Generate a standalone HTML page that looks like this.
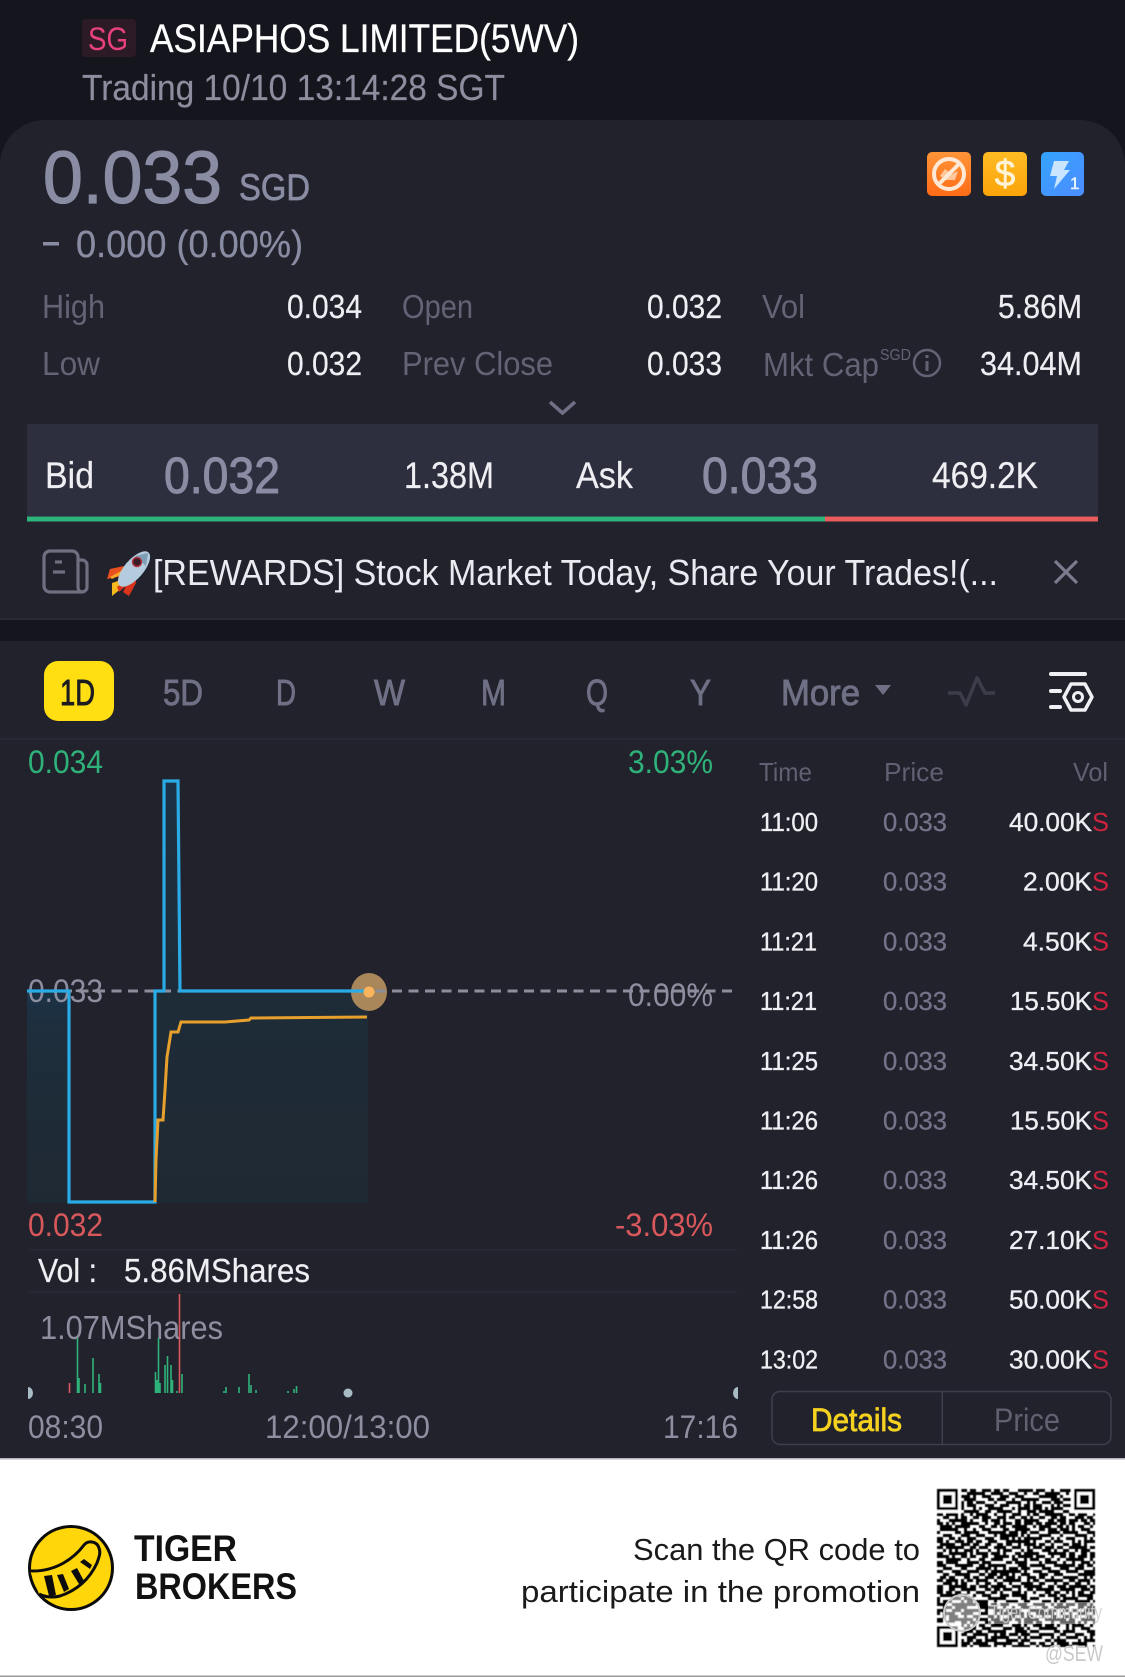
<!DOCTYPE html>
<html><head><meta charset="utf-8"><style>
html,body{margin:0;padding:0;background:#14151d;width:1125px;height:1677px;overflow:hidden}
svg{display:block;position:absolute;left:0;top:0}
text{font-family:"Liberation Sans",sans-serif;white-space:pre}
.g{fill:#626375}.w{fill:#eeeef3;stroke:#eeeef3;stroke-width:.2}.p{fill:#8a8ca3}.m{fill:#8e8fa1}
.tab{fill:#6f7085;stroke:#6f7085;stroke-width:.9}
.t{font-size:26px;fill:#eeeef3;stroke:#eeeef3;stroke-width:.35}
.q{font-size:26px;fill:#73748a;stroke:#73748a;stroke-width:.3}
.s{font-size:26px;fill:#d0213f}
</style></head><body>
<svg width="1125" height="1677" viewBox="0 0 1125 1677" xmlns="http://www.w3.org/2000/svg">
<defs>
<linearGradient id="fl" x1="0" y1="0" x2="0" y2="1"><stop offset="0" stop-color="#1b3247"/><stop offset=".2" stop-color="#1e2e3c"/><stop offset="1" stop-color="#1f2933"/></linearGradient>
<linearGradient id="o" x1="0" y1="0" x2="0" y2="1"><stop offset="0" stop-color="#ff9438"/><stop offset="1" stop-color="#ff6c16"/></linearGradient>
<linearGradient id="y" x1="0" y1="0" x2="0" y2="1"><stop offset="0" stop-color="#ffbb24"/><stop offset="1" stop-color="#fba40a"/></linearGradient>
<linearGradient id="b" x1="0" y1="0" x2="1" y2="1"><stop offset="0" stop-color="#34a4ff"/><stop offset="1" stop-color="#4d8cff"/></linearGradient>
<pattern id="qa" width="11" height="11" patternUnits="userSpaceOnUse" patternTransform="translate(937 1489) scale(3)"><path stroke="#000" stroke-width="1" d="M0 .5h2M5 .5h1M8 .5h2M3 1.5h2M7 1.5h1M10 1.5h1M1 2.5h1M4 2.5h3M0 3.5h1M6 3.5h2M9 3.5h2M2 4.5h3M8 4.5h1M0 5.5h2M5 5.5h1M7 5.5h1M10 5.5h1M3 6.5h1M6 6.5h3M1 7.5h2M5 7.5h1M9 7.5h2M0 8.5h1M3 8.5h3M8 8.5h1M2 9.5h1M6 9.5h1M9 9.5h1M0 10.5h1M4 10.5h2M7 10.5h3"/></pattern>
<pattern id="qb" width="13" height="13" patternUnits="userSpaceOnUse" patternTransform="translate(937 1489) scale(3)"><path stroke="#000" stroke-width="1" d="M2 .5h3M9 .5h1M0 1.5h1M6 1.5h2M11 1.5h2M2 2.5h1M8 2.5h3M4 3.5h2M12 3.5h1M0 4.5h2M6 4.5h1M10 4.5h2M3 5.5h2M8 5.5h1M1 6.5h1M6 6.5h3M12 6.5h1M4 7.5h1M9 7.5h3M0 8.5h2M6 8.5h1M2 9.5h2M8 9.5h2M12 9.5h1M5 10.5h3M0 11.5h1M3 11.5h1M10 11.5h2M1 12.5h2M6 12.5h1M8 12.5h2"/></pattern>
<filter id="soft" x="-5%" y="-5%" width="110%" height="110%"><feGaussianBlur stdDeviation=".6"/></filter>
</defs>

<!-- header -->
<rect width="1125" height="1677" fill="#14151d"/>
<rect x="82" y="19" width="54" height="38" rx="4" fill="#2d1a27"/>
<text x="88" y="50" font-size="32" fill="#e8427c" textLength="40" lengthAdjust="spacingAndGlyphs">SG</text>
<text x="150" y="52" font-size="40" fill="#fff" stroke="#fff" stroke-width=".3" textLength="429" lengthAdjust="spacingAndGlyphs">ASIAPHOS LIMITED(5WV)</text>
<text x="82" y="100" font-size="36" fill="#8c8d9e" stroke="#8c8d9e" stroke-width=".2" textLength="423" lengthAdjust="spacingAndGlyphs">Trading 10/10 13:14:28 SGT</text>

<!-- quote card -->
<path d="M0 620V165a45 45 0 0 1 45-45H1080a45 45 0 0 1 45 45V620z" fill="#21222c"/>
<rect x="0" y="618" width="1125" height="2" fill="#282934"/>
<text x="43" y="203" font-size="74" class="p" stroke="#8a8ca3" stroke-width="1.200" textLength="179" lengthAdjust="spacingAndGlyphs">0.033</text>
<text x="239" y="200" font-size="37" class="p" stroke="#8a8ca3" stroke-width=".7" textLength="71" lengthAdjust="spacingAndGlyphs">SGD</text>
<rect x="43" y="242" width="16" height="3.500" fill="#8a8ca3"/>
<text x="76" y="257" font-size="38" class="p" stroke="#8a8ca3" stroke-width=".3" textLength="227" lengthAdjust="spacingAndGlyphs">0.000 (0.00%)</text>

<text x="42" y="318" font-size="33" class="g" textLength="63" lengthAdjust="spacingAndGlyphs">High</text>
<text x="287" y="318" font-size="33" class="w" textLength="75" lengthAdjust="spacingAndGlyphs">0.034</text>
<text x="402" y="318" font-size="33" class="g" textLength="71" lengthAdjust="spacingAndGlyphs">Open</text>
<text x="647" y="318" font-size="33" class="w" textLength="75" lengthAdjust="spacingAndGlyphs">0.032</text>
<text x="762" y="318" font-size="33" class="g" textLength="43" lengthAdjust="spacingAndGlyphs">Vol</text>
<text x="998" y="318" font-size="33" class="w" textLength="84" lengthAdjust="spacingAndGlyphs">5.86M</text>
<text x="42" y="375" font-size="33" class="g" textLength="58" lengthAdjust="spacingAndGlyphs">Low</text>
<text x="287" y="375" font-size="33" class="w" textLength="75" lengthAdjust="spacingAndGlyphs">0.032</text>
<text x="402" y="375" font-size="33" class="g" textLength="151" lengthAdjust="spacingAndGlyphs">Prev Close</text>
<text x="647" y="375" font-size="33" class="w" textLength="75" lengthAdjust="spacingAndGlyphs">0.033</text>
<text x="763" y="376" font-size="33" class="g" textLength="116" lengthAdjust="spacingAndGlyphs">Mkt Cap</text>
<text x="880" y="360" font-size="16" class="g" textLength="31" lengthAdjust="spacingAndGlyphs">SGD</text>
<circle cx="927" cy="363" r="13" fill="none" stroke="#626375" stroke-width="2.500"/>
<rect x="925.500" y="361" width="3" height="10" fill="#626375"/><rect x="925.500" y="355" width="3" height="3" fill="#626375"/>
<text x="980" y="375" font-size="33" class="w" textLength="102" lengthAdjust="spacingAndGlyphs">34.04M</text>
<path d="M550 402l12.500 11 12.500-11" fill="none" stroke="#6f7085" stroke-width="3.500"/>

<!-- badges -->
<rect x="927" y="152" width="44" height="44" rx="5" fill="url(#o)"/>
<path d="M940 176l5-7 7 5 6-3-3 9h-9z" fill="#ffc79a"/>
<circle cx="949" cy="174" r="15" fill="none" stroke="#ffe9d6" stroke-width="4"/>
<path d="M938 185L960 163" stroke="#ffe9d6" stroke-width="4"/>
<rect x="983" y="152" width="44" height="44" rx="5" fill="url(#y)"/>
<text x="1005" y="186" font-size="37" fill="#fff3d6" stroke="#fff3d6" stroke-width=".6" text-anchor="middle">$</text>
<rect x="1041" y="152" width="43" height="44" rx="5" fill="url(#b)"/>
<path d="M1054 161h15l-5 9h6l-16 19 3-13h-7z" fill="#c9e4ff"/>
<text x="1070" y="189" font-size="17" fill="#e4f1ff" stroke="#e4f1ff" stroke-width=".5">1</text>

<!-- bid/ask -->
<rect x="27" y="424" width="1071" height="92" fill="#2e2f3e"/>
<rect x="27" y="516.500" width="798" height="5" fill="#2db47b"/>
<rect x="825" y="516.500" width="273" height="5" fill="#e85c5c"/>
<text x="45" y="488" font-size="37" class="w" textLength="49" lengthAdjust="spacingAndGlyphs">Bid</text>
<text x="164" y="493" font-size="51" class="p" stroke="#8a8ca3" stroke-width="1" textLength="116" lengthAdjust="spacingAndGlyphs">0.032</text>
<text x="404" y="488" font-size="37" class="w" textLength="90" lengthAdjust="spacingAndGlyphs">1.38M</text>
<text x="576" y="488" font-size="37" class="w" textLength="57" lengthAdjust="spacingAndGlyphs">Ask</text>
<text x="702" y="493" font-size="51" class="p" stroke="#8a8ca3" stroke-width="1" textLength="116" lengthAdjust="spacingAndGlyphs">0.033</text>
<text x="932" y="488" font-size="37" class="w" textLength="106" lengthAdjust="spacingAndGlyphs">469.2K</text>

<!-- notice -->
<path d="M78 560h4a5 5 0 0 1 5 5v22a5 5 0 0 1-5 5H50a6 6 0 0 1-6-6V557a6 6 0 0 1 6-6h22a6 6 0 0 1 6 6v30a5 5 0 0 0 4 5" fill="none" stroke="#6e6f80" stroke-width="3.200"/>
<path d="M55 562h7M53 572h12" stroke="#6e6f80" stroke-width="3.200"/>
<path d="M124 566l-14 3-3 10 15-3z" fill="#e8501f"/><path d="M110 577l11-6 1 3-10 5z" fill="#f9a825"/>
<path d="M112 583l12-4 4 4-16 13z" fill="#f5b81f"/><path d="M117 587l8-6 1 5-7 6z" fill="#d9341c"/>
<path d="M129 580l6-5 1 8-7 13-6-4z" fill="#d9341c"/>
<ellipse cx="134" cy="569" rx="9.500" ry="22" transform="rotate(41 134 569)" fill="#b4ccdd"/>
<path d="M148 553l-2 13-11-10z" fill="#7f9db5"/>
<circle cx="137" cy="562" r="4.500" fill="#3a1c26" stroke="#b23240" stroke-width="1.500"/>
<text x="153" y="585" font-size="36" fill="#eaeaf0" textLength="845" lengthAdjust="spacingAndGlyphs">[REWARDS] Stock Market Today, Share Your Trades!(...</text>
<path d="M1055 561l22 22M1077 561l-22 22" stroke="#7a7b8d" stroke-width="3.200"/>

<!-- chart panel -->
<rect x="0" y="641" width="1125" height="818" fill="#21222c"/>
<rect x="44" y="661" width="70" height="60" rx="14" fill="#ffdf12"/>
<text x="60" y="705" font-size="36" fill="#1c1c20" stroke="#1c1c20" stroke-width=".9" textLength="35" lengthAdjust="spacingAndGlyphs">1D</text>
<text x="163" y="705" font-size="36" class="tab" textLength="40" lengthAdjust="spacingAndGlyphs">5D</text>
<text x="276" y="705" font-size="36" class="tab" textLength="20" lengthAdjust="spacingAndGlyphs">D</text>
<text x="374" y="705" font-size="36" class="tab" textLength="31" lengthAdjust="spacingAndGlyphs">W</text>
<text x="481" y="705" font-size="36" class="tab" textLength="25" lengthAdjust="spacingAndGlyphs">M</text>
<text x="586" y="705" font-size="36" class="tab" textLength="22" lengthAdjust="spacingAndGlyphs">Q</text>
<text x="690" y="705" font-size="36" class="tab" textLength="21" lengthAdjust="spacingAndGlyphs">Y</text>
<text x="781" y="705" font-size="36" class="tab" textLength="79" lengthAdjust="spacingAndGlyphs">More</text>
<path d="M875 685h16l-8 10z" fill="#6f7085"/>
<path d="M948 693h12l6 12 11-27 8 15h10" fill="none" stroke="#3c3d4a" stroke-width="3.500" stroke-linejoin="round"/>
<path d="M1051 674h34" stroke="#f0f0f4" stroke-width="4" stroke-linecap="round"/>
<path d="M1051 691h9M1051 707h9" stroke="#f0f0f4" stroke-width="4" stroke-linecap="round"/>
<path d="M1071 684h14l7 13-7 13h-14l-7-13z" fill="none" stroke="#f0f0f4" stroke-width="3.500" stroke-linejoin="round"/>
<circle cx="1078" cy="697" r="4.500" fill="none" stroke="#f0f0f4" stroke-width="3"/>
<rect x="0" y="738" width="1125" height="1.500" fill="#282934"/>

<!-- chart -->
<path d="M27 991H69V1203H27z" fill="url(#fl)"/>
<path d="M155 1203V991H164V781H179L181 991H368V1203z" fill="url(#fl)"/>
<ellipse cx="369" cy="992" rx="18" ry="19" fill="#a9875a"/>
<path d="M29 991H737" stroke="#8d8e9c" stroke-width="3" stroke-dasharray="10 6.500"/>
<text x="28" y="1002" font-size="32" fill="#8d8e9f" textLength="75" lengthAdjust="spacingAndGlyphs">0.033</text>
<text x="628" y="1006" font-size="32" fill="#8d8e9f" textLength="85" lengthAdjust="spacingAndGlyphs">0.00%</text>
<path d="M27 991H69V1202H155V991H164V781H178L180 991H369" fill="none" stroke="#2aabe6" stroke-width="3.200"/>
<path d="M155 1202L156 1160 158 1120H163L165 1090 167 1057 171 1032H178L181 1022H225L249 1020 251 1018 367 1017" fill="none" stroke="#e8a02c" stroke-width="3"/>
<circle cx="369" cy="992" r="5.500" fill="#fbb45c"/>
<text x="28" y="773" font-size="32" fill="#2fb27a" textLength="75" lengthAdjust="spacingAndGlyphs">0.034</text>
<text x="628" y="773" font-size="32" fill="#2fb27a" textLength="85" lengthAdjust="spacingAndGlyphs">3.03%</text>
<text x="28" y="1236" font-size="32" fill="#d9585c" textLength="75" lengthAdjust="spacingAndGlyphs">0.032</text>
<text x="615" y="1236" font-size="32" fill="#d9585c" textLength="98" lengthAdjust="spacingAndGlyphs">-3.03%</text>
<rect x="29" y="1249" width="708" height="1.500" fill="#2a2b36"/>
<rect x="29" y="1291" width="708" height="1.500" fill="#2a2b36"/>
<text x="38" y="1282" font-size="33" class="w" textLength="59" lengthAdjust="spacingAndGlyphs">Vol :</text>
<text x="124" y="1282" font-size="33" class="w" textLength="186" lengthAdjust="spacingAndGlyphs">5.86MShares</text>
<text x="40" y="1339" font-size="33" fill="#8d8e9f" textLength="183" lengthAdjust="spacingAndGlyphs">1.07MShares</text>
<path stroke="#2fb27a" stroke-width="1.600" fill="none" d="M77.500 1393V1338M79 1393V1378M85 1393V1384M93 1393V1358M99 1393V1374M100.500 1393V1383M155.500 1393V1372M157 1393V1380M158.500 1393V1338M160 1393V1383M165 1393V1365M167.500 1393V1356M171 1393V1365M172.500 1393V1380M177 1393V1391M182 1393V1374M224 1393V1391M226 1393V1387M239 1393V1387M249 1393V1374M251 1393V1385M256 1393V1390M288 1393V1391M294 1393V1389M296.500 1393V1386"/>
<path stroke="#d9585c" stroke-width="1.600" fill="none" d="M69.500 1393V1383M179.500 1393V1294"/>
<path d="M28 1387a5 6 0 0 1 0 12z" fill="#a8bcc6"/>
<circle cx="348" cy="1393" r="4.500" fill="#a8bcc6"/>
<path d="M738 1387a5 6 0 0 0 0 12z" fill="#a8bcc6"/>
<text x="28" y="1438" font-size="32" fill="#8d8e9f" textLength="75" lengthAdjust="spacingAndGlyphs">08:30</text>
<text x="265" y="1438" font-size="32" fill="#8d8e9f" textLength="165" lengthAdjust="spacingAndGlyphs">12:00/13:00</text>
<text x="663" y="1438" font-size="32" fill="#8d8e9f" textLength="75" lengthAdjust="spacingAndGlyphs">17:16</text>

<!-- trades table -->
<text x="759" y="781" font-size="26" fill="#5f6072" textLength="53" lengthAdjust="spacingAndGlyphs">Time</text>
<text x="884" y="781" font-size="26" fill="#5f6072" textLength="60" lengthAdjust="spacingAndGlyphs">Price</text>
<text x="1073" y="781" font-size="26" fill="#5f6072" textLength="35" lengthAdjust="spacingAndGlyphs">Vol</text>

<text x="760" y="831" class="t" textLength="58" lengthAdjust="spacingAndGlyphs">11:00</text><text x="883" y="831" class="q" textLength="64" lengthAdjust="spacingAndGlyphs">0.033</text><text x="1009" y="831" class="t" textLength="83" lengthAdjust="spacingAndGlyphs">40.00K</text><text x="1092" y="831" class="s" textLength="17" lengthAdjust="spacingAndGlyphs">S</text>
<text x="760" y="890.700" class="t" textLength="58" lengthAdjust="spacingAndGlyphs">11:20</text><text x="883" y="890.700" class="q" textLength="64" lengthAdjust="spacingAndGlyphs">0.033</text><text x="1023" y="890.700" class="t" textLength="69" lengthAdjust="spacingAndGlyphs">2.00K</text><text x="1092" y="890.700" class="s" textLength="17" lengthAdjust="spacingAndGlyphs">S</text>
<text x="760" y="950.400" class="t" textLength="57" lengthAdjust="spacingAndGlyphs">11:21</text><text x="883" y="950.400" class="q" textLength="64" lengthAdjust="spacingAndGlyphs">0.033</text><text x="1023" y="950.400" class="t" textLength="69" lengthAdjust="spacingAndGlyphs">4.50K</text><text x="1092" y="950.400" class="s" textLength="17" lengthAdjust="spacingAndGlyphs">S</text>
<text x="760" y="1010.100" class="t" textLength="57" lengthAdjust="spacingAndGlyphs">11:21</text><text x="883" y="1010.100" class="q" textLength="64" lengthAdjust="spacingAndGlyphs">0.033</text><text x="1010" y="1010.100" class="t" textLength="82" lengthAdjust="spacingAndGlyphs">15.50K</text><text x="1092" y="1010.100" class="s" textLength="17" lengthAdjust="spacingAndGlyphs">S</text>
<text x="760" y="1069.800" class="t" textLength="58" lengthAdjust="spacingAndGlyphs">11:25</text><text x="883" y="1069.800" class="q" textLength="64" lengthAdjust="spacingAndGlyphs">0.033</text><text x="1009" y="1069.800" class="t" textLength="83" lengthAdjust="spacingAndGlyphs">34.50K</text><text x="1092" y="1069.800" class="s" textLength="17" lengthAdjust="spacingAndGlyphs">S</text>
<text x="760" y="1129.500" class="t" textLength="58" lengthAdjust="spacingAndGlyphs">11:26</text><text x="883" y="1129.500" class="q" textLength="64" lengthAdjust="spacingAndGlyphs">0.033</text><text x="1010" y="1129.500" class="t" textLength="82" lengthAdjust="spacingAndGlyphs">15.50K</text><text x="1092" y="1129.500" class="s" textLength="17" lengthAdjust="spacingAndGlyphs">S</text>
<text x="760" y="1189.200" class="t" textLength="58" lengthAdjust="spacingAndGlyphs">11:26</text><text x="883" y="1189.200" class="q" textLength="64" lengthAdjust="spacingAndGlyphs">0.033</text><text x="1009" y="1189.200" class="t" textLength="83" lengthAdjust="spacingAndGlyphs">34.50K</text><text x="1092" y="1189.200" class="s" textLength="17" lengthAdjust="spacingAndGlyphs">S</text>
<text x="760" y="1248.900" class="t" textLength="58" lengthAdjust="spacingAndGlyphs">11:26</text><text x="883" y="1248.900" class="q" textLength="64" lengthAdjust="spacingAndGlyphs">0.033</text><text x="1009" y="1248.900" class="t" textLength="83" lengthAdjust="spacingAndGlyphs">27.10K</text><text x="1092" y="1248.900" class="s" textLength="17" lengthAdjust="spacingAndGlyphs">S</text>
<text x="760" y="1308.600" class="t" textLength="58" lengthAdjust="spacingAndGlyphs">12:58</text><text x="883" y="1308.600" class="q" textLength="64" lengthAdjust="spacingAndGlyphs">0.033</text><text x="1009" y="1308.600" class="t" textLength="83" lengthAdjust="spacingAndGlyphs">50.00K</text><text x="1092" y="1308.600" class="s" textLength="17" lengthAdjust="spacingAndGlyphs">S</text>
<text x="760" y="1368.300" class="t" textLength="58" lengthAdjust="spacingAndGlyphs">13:02</text><text x="883" y="1368.300" class="q" textLength="64" lengthAdjust="spacingAndGlyphs">0.033</text><text x="1009" y="1368.300" class="t" textLength="83" lengthAdjust="spacingAndGlyphs">30.00K</text><text x="1092" y="1368.300" class="s" textLength="17" lengthAdjust="spacingAndGlyphs">S</text>

<rect x="772" y="1391.500" width="339" height="53" rx="8" fill="none" stroke="#3e3f4c" stroke-width="1.500"/>
<rect x="941.500" y="1391" width="1.500" height="54" fill="#3e3f4c"/>
<text x="811" y="1431" font-size="32" fill="#f5d21f" stroke="#f5d21f" stroke-width=".8" textLength="91" lengthAdjust="spacingAndGlyphs">Details</text>
<text x="994" y="1431" font-size="32" fill="#5f6070" textLength="66" lengthAdjust="spacingAndGlyphs">Price</text>

<!-- footer -->
<rect x="0" y="1459" width="1125" height="218" fill="#fff"/>
<rect x="0" y="1458" width="1125" height="1.500" fill="#b5b5bb"/>
<rect x="0" y="1675.500" width="1125" height="1.500" fill="#999"/>
<circle cx="71" cy="1568" r="41.500" fill="#ffd60a" stroke="#0c0c0c" stroke-width="3"/>
<path d="M30 1571C57 1572 75 1557 84 1545 88 1540 97 1541 99 1548 101 1553 99 1557 97 1563 90 1578 78 1590 60 1596 52 1598 45 1597 39 1594" fill="#ffd60a" stroke="#0c0c0c" stroke-width="3" stroke-linejoin="round"/>
<path d="M44 1576l8-1 4 20-7 1zM57 1575l6-1 6 15-5 3zM71 1571l6-3 7 13-5 3zM80 1562l4-3 8 6-2 4z" fill="#0c0c0c"/>
<text x="134" y="1561" font-size="37" font-weight="bold" fill="#111" textLength="103" lengthAdjust="spacingAndGlyphs">TIGER</text>
<text x="135" y="1599" font-size="37" font-weight="bold" fill="#111" textLength="162" lengthAdjust="spacingAndGlyphs">BROKERS</text>
<text x="633" y="1560" font-size="31" fill="#1a1a1a" textLength="287" lengthAdjust="spacingAndGlyphs">Scan the QR code to</text>
<text x="521" y="1602" font-size="31" fill="#1a1a1a" textLength="399" lengthAdjust="spacingAndGlyphs">participate in the promotion</text>

<!-- QR -->
<g filter="url(#soft)">
<rect x="937" y="1489" width="158" height="158" fill="url(#qa)"/>
<rect x="937" y="1489" width="158" height="158" fill="url(#qb)"/>
<rect x="937" y="1489" width="24" height="24" fill="#fff"/><rect x="1071" y="1489" width="24" height="24" fill="#fff"/><rect x="937" y="1623" width="24" height="24" fill="#fff"/>
<path fill="#000" fill-rule="evenodd" d="M937 1489h21v21h-21zM940 1492v15h15v-15zM943 1495h9v9h-9zM1074 1489h21v21h-21zM1077 1492v15h15v-15zM1080 1495h9v9h-9zM937 1626h21v21h-21zM940 1629v15h15v-15zM943 1632h9v9h-9z"/>
</g>
<circle cx="962" cy="1613" r="18" fill="#fff" fill-opacity=".5" stroke="#c9c9c9" stroke-width="2"/>
<rect x="988" y="1602" width="112" height="22" fill="#fff" fill-opacity=".4"/>
<text x="990" y="1619" font-size="20" fill="#cfcfcf" fill-opacity=".9" textLength="112" lengthAdjust="spacingAndGlyphs">Tiger Community</text>
<text x="1045" y="1661" font-size="22" fill="#c9c9c9" textLength="58" lengthAdjust="spacingAndGlyphs">@SEW</text>
</svg>
</body></html>
